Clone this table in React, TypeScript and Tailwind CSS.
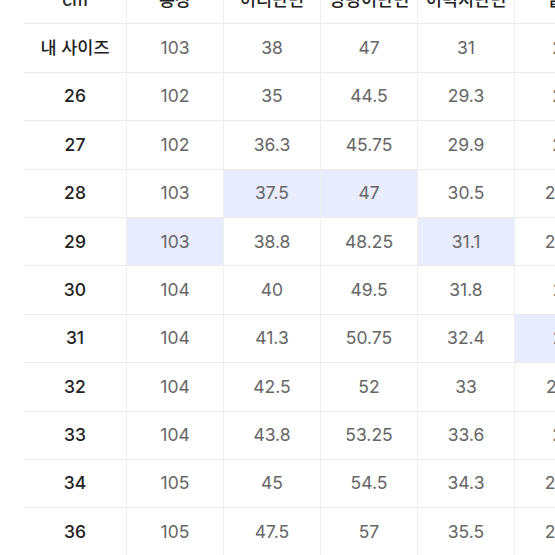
import React from 'react';

type Row = {
    label: string;
    values: string[];
    hi?: number[];
};

const headers = ['cm', '총장', '허리단면', '엉덩이단면', '허벅지단면', '밑위'];

const rows: Row[] = [
    { label: '내 사이즈', values: ['103', '38', '47', '31', '26'] },
    { label: '26', values: ['102', '35', '44.5', '29.3', '25'] },
    { label: '27', values: ['102', '36.3', '45.75', '29.9', '26'] },
    { label: '28', values: ['103', '37.5', '47', '30.5', '26.5'], hi: [1, 2] },
    { label: '29', values: ['103', '38.8', '48.25', '31.1', '26.5'], hi: [0, 3] },
    { label: '30', values: ['104', '40', '49.5', '31.8', '27'] },
    { label: '31', values: ['104', '41.3', '50.75', '32.4', '27'], hi: [4] },
    { label: '32', values: ['104', '42.5', '52', '33', '27.5'] },
    { label: '33', values: ['104', '43.8', '53.25', '33.6', '28'] },
    { label: '34', values: ['105', '45', '54.5', '34.3', '28.5'] },
    { label: '36', values: ['105', '47.5', '57', '35.5', '29.5'] },
];

const font = { fontFamily: 'Inter, "Noto Sans CJK KR", sans-serif' };

export default function App() {
    return (
        <div className="w-[555px] h-[555px] overflow-hidden bg-white" style={font}>
            <div className="mt-[-24px] pl-[24px] w-[640px]">
                {/* header */}
                <div className="flex h-[48.4px] border-b border-[#ebebeb] text-[17.5px] font-medium text-[#222222]">
                    {headers.map((h, i) => (
                        <div
                            key={h}
                            className={
                                i === 0
                                    ? 'w-[102px] shrink-0 flex items-center justify-center'
                                    : 'w-[97px] shrink-0 flex items-center justify-center border-l border-[#efefef]'
                            }
                        >
                            {h}
                        </div>
                    ))}
                </div>

                {rows.map(row => (
                    <div key={row.label} className="flex h-[48.4px] border-b border-[#ebebeb] text-[17.5px]">
                        <div className="w-[102px] shrink-0 flex items-center justify-center font-medium text-[#222222]">
                            {row.label}
                        </div>
                        {row.values.map((v, i) => (
                            <div
                                key={i}
                                className={
                                    'w-[97px] shrink-0 flex items-center justify-center border-l border-[#efefef] text-[#666666] ' +
                                    (row.hi?.includes(i) ? 'bg-[#e9ecfc]' : '')
                                }
                            >
                                {v}
                            </div>
                        ))}
                    </div>
                ))}
            </div>
        </div>
    );
}
